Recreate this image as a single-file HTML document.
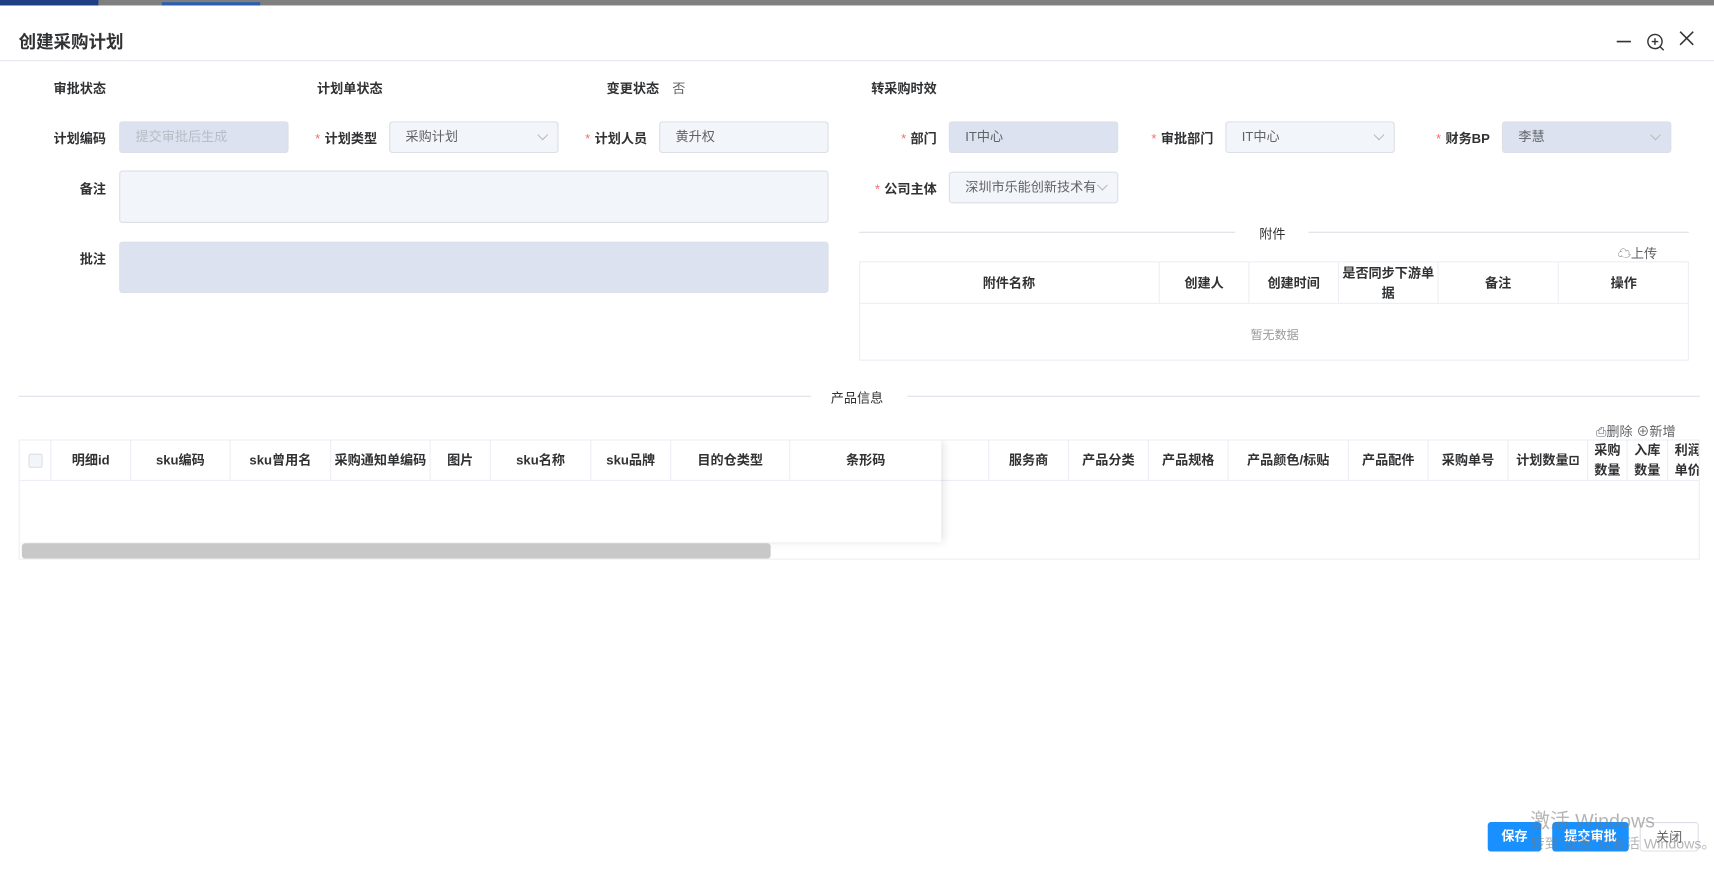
<!DOCTYPE html>
<html><head><meta charset="utf-8"><style>
*{box-sizing:border-box;margin:0;padding:0}
body{width:1714px;height:871px;overflow:hidden;background:#fff;font-family:"Liberation Sans","Noto Sans CJK SC",sans-serif;color:#303133}
#w{position:absolute;left:0;top:0;width:1568px;height:797px;transform:scale(1.09311);transform-origin:0 0;overflow:hidden}
.a{position:absolute;white-space:nowrap}
.lb{font-size:12px;font-weight:bold;color:#303133;text-align:right}
.lb i{color:#f56c6c;font-style:normal;margin-right:4px;font-weight:normal}
.in{position:absolute;height:29px;border:1px solid #dcdfe6;border-radius:3px;background:#f2f5fa;font-size:12px;color:#606266;padding:0 14px;line-height:27px}
.dis{background:#dce2f0}
.ar{position:absolute;right:10px;top:8px;width:7px;height:7px;border-right:1px solid #bbb;border-bottom:1px solid #bbb;transform:rotate(45deg)}
.th{position:absolute;font-size:12px;font-weight:bold;color:#303133;text-align:center;border-right:1px solid #ebeef5;display:flex;align-items:center;justify-content:center;line-height:18px}
.div{position:absolute;height:1px;background:#dcdfe6}
.btn{position:absolute;height:27px;border-radius:3px;font-size:12px;text-align:center;line-height:27px}
</style></head><body><div id="w">
<div class="a" style="left:0;top:0;width:1568px;height:5px;background:#7f7f7f"></div>
<div class="a" style="left:0;top:0;width:90px;height:5px;background:#1f3f85"></div>
<div class="a" style="left:148px;top:2px;width:90px;height:3px;background:#2a5fb0"></div>
<div class="a" style="left:17px;top:25px;font-size:16px;font-weight:bold;color:#303133">创建采购计划</div>
<div class="div" style="left:0;top:55px;width:1568px;background:#e4e7ed"></div>
<svg class="a" style="left:1476px;top:26px" width="80" height="22" viewBox="0 0 80 22"><path d="M3 12h13" stroke="#333" stroke-width="1.5"/><circle cx="38" cy="12" r="6.5" fill="none" stroke="#333" stroke-width="1.3"/><path d="M38 9v6M35 12h6M43 17l3 3" stroke="#333" stroke-width="1.3"/><path d="M61 3l12 12M73 3L61 15" stroke="#333" stroke-width="1.4"/></svg>

<div class="a lb" style="left:0;width:97px;top:72px">审批状态</div>
<div class="a lb" style="left:250px;width:100px;top:72px">计划单状态</div>
<div class="a lb" style="left:500px;width:103px;top:72px">变更状态</div>
<div class="a" style="left:615px;top:72px;font-size:12px;color:#606266">否</div>
<div class="a lb" style="left:760px;width:97px;top:72px">转采购时效</div>

<div class="a lb" style="left:0;width:97px;top:118px">计划编码</div>
<div class="in dis" style="left:109px;top:111px;width:155px;color:#b8bcc4">提交审批后生成</div>
<div class="a lb" style="left:250px;width:95px;top:118px"><i>*</i>计划类型</div>
<div class="in" style="left:356px;top:111px;width:155px">采购计划<span class="ar"></span></div>
<div class="a lb" style="left:500px;width:92px;top:118px"><i>*</i>计划人员</div>
<div class="in" style="left:603px;top:111px;width:155px">黄升权</div>
<div class="a lb" style="left:760px;width:97px;top:118px"><i>*</i>部门</div>
<div class="in dis" style="left:868px;top:111px;width:155px">IT中心</div>
<div class="a lb" style="left:1010px;width:100px;top:118px"><i>*</i>审批部门</div>
<div class="in" style="left:1121px;top:111px;width:155px">IT中心<span class="ar"></span></div>
<div class="a lb" style="left:1280px;width:83px;top:118px"><i>*</i>财务BP</div>
<div class="in dis" style="left:1374px;top:111px;width:155px">李慧<span class="ar"></span></div>

<div class="a lb" style="left:0;width:97px;top:164px">备注</div>
<div class="in" style="left:109px;top:156px;width:649px;height:48px"></div>
<div class="a lb" style="left:760px;width:97px;top:164px"><i>*</i>公司主体</div>
<div class="in" style="left:868px;top:157px;width:155px;overflow:hidden">深圳市乐能创新技术有<span class="ar" style="background:#f2f5fa"></span></div>
<div class="a lb" style="left:0;width:97px;top:228px">批注</div>
<div class="in dis" style="left:109px;top:221px;width:649px;height:47px"></div>

<div class="div" style="left:786px;top:212px;width:344px"></div>
<div class="div" style="left:1197px;top:212px;width:348px"></div>
<div class="a" style="left:1152px;top:205px;font-size:12px">附件</div>
<div class="a" style="left:1480px;top:223px;font-size:12px;color:#606266">☁上传</div>
<div class="a" style="left:786px;top:239px;width:759px;height:91px;border:1px solid #ebeef5"></div>
<div class="div" style="left:786px;top:277px;width:759px;background:#ebeef5"></div>
<div class="th" style="left:786px;top:240px;width:275px;height:37px">附件名称</div>
<div class="th" style="left:1061px;top:240px;width:82px;height:37px">创建人</div>
<div class="th" style="left:1143px;top:240px;width:82px;height:37px">创建时间</div>
<div class="th" style="left:1225px;top:240px;width:91px;height:37px">是否同步下游单<br>据</div>
<div class="th" style="left:1316px;top:240px;width:110px;height:37px">备注</div>
<div class="th" style="left:1426px;top:240px;width:119px;height:37px;border:0">操作</div>
<div class="a" style="left:1144px;top:298px;font-size:11px;color:#999">暂无数据</div>

<div class="div" style="left:17px;top:362px;width:725px"></div>
<div class="div" style="left:830px;top:362px;width:725px"></div>
<div class="a" style="left:760px;top:355px;font-size:12px">产品信息</div>
<div class="a" style="left:1460px;top:386px;font-size:12px;color:#606266">⎙删除 ⊕新增</div>

<div class="a" style="left:17px;top:402px;width:1538px;height:110px;border:1px solid #ebeef5;overflow:hidden">
<div class="a" style="left:0;top:36px;width:1538px;height:1px;background:#ebeef5"></div>
<div class="th" style="left:843px;top:0;width:44px;height:36px"></div>
<div class="th" style="left:887px;top:0;width:73px;height:36px">服务商</div>
<div class="th" style="left:960px;top:0;width:73px;height:36px">产品分类</div>
<div class="th" style="left:1033px;top:0;width:73px;height:36px">产品规格</div>
<div class="th" style="left:1106px;top:0;width:110px;height:36px">产品颜色/标贴</div>
<div class="th" style="left:1216px;top:0;width:73px;height:36px">产品配件</div>
<div class="th" style="left:1289px;top:0;width:73px;height:36px">采购单号</div>
<div class="th" style="left:1362px;top:0;width:73px;height:36px">计划数量⊡</div>
<div class="th" style="left:1435px;top:0;width:36px;height:36px">采购<br>数量</div>
<div class="th" style="left:1471px;top:0;width:37px;height:36px">入库<br>数量</div>
<div class="th" style="left:1508px;top:0;width:36px;height:36px;justify-content:flex-start;padding-left:6px">利润<br>单价</div>
<div class="a" style="left:0;top:0;width:843px;height:93px;background:#fff;box-shadow:2px 0 8px rgba(0,0,0,.12)">
<div class="a" style="left:0;top:36px;width:843px;height:1px;background:#ebeef5"></div>
<div class="th" style="left:0;top:0;width:29px;height:36px"><span style="width:13px;height:13px;border:1px solid #dcdfe6;background:#f2f5fa;border-radius:2px"></span></div>
<div class="th" style="left:29px;top:0;width:73px;height:36px">明细id</div>
<div class="th" style="left:102px;top:0;width:91px;height:36px">sku编码</div>
<div class="th" style="left:193px;top:0;width:92px;height:36px">sku曾用名</div>
<div class="th" style="left:285px;top:0;width:91px;height:36px">采购通知单编码</div>
<div class="th" style="left:376px;top:0;width:55px;height:36px">图片</div>
<div class="th" style="left:431px;top:0;width:92px;height:36px">sku名称</div>
<div class="th" style="left:523px;top:0;width:73px;height:36px">sku品牌</div>
<div class="th" style="left:596px;top:0;width:109px;height:36px">目的仓类型</div>
<div class="th" style="left:705px;top:0;width:138px;height:36px;border:0">条形码</div>
</div>
<div class="a" style="left:2px;top:94px;width:685px;height:14px;background:#c8c8c8;border-radius:3px"></div>
</div>

<div class="btn" style="left:1361px;top:752px;width:49px;background:#1890ff;color:#fff;font-weight:bold">保存</div>
<div class="btn" style="left:1420px;top:752px;width:70px;background:#1890ff;color:#fff;font-weight:bold">提交审批</div>
<div class="btn" style="left:1500px;top:752px;width:54px;border:1px solid #dcdfe6;color:#606266">关闭</div>
<div class="a" style="left:1400px;top:737px;font-size:18px;color:rgba(120,120,120,.55)">激活 Windows</div>
<div class="a" style="left:1400px;top:761px;font-size:13px;color:rgba(120,120,120,.55)">转到"设置"以激活 Windows。</div>
</div></body></html>
